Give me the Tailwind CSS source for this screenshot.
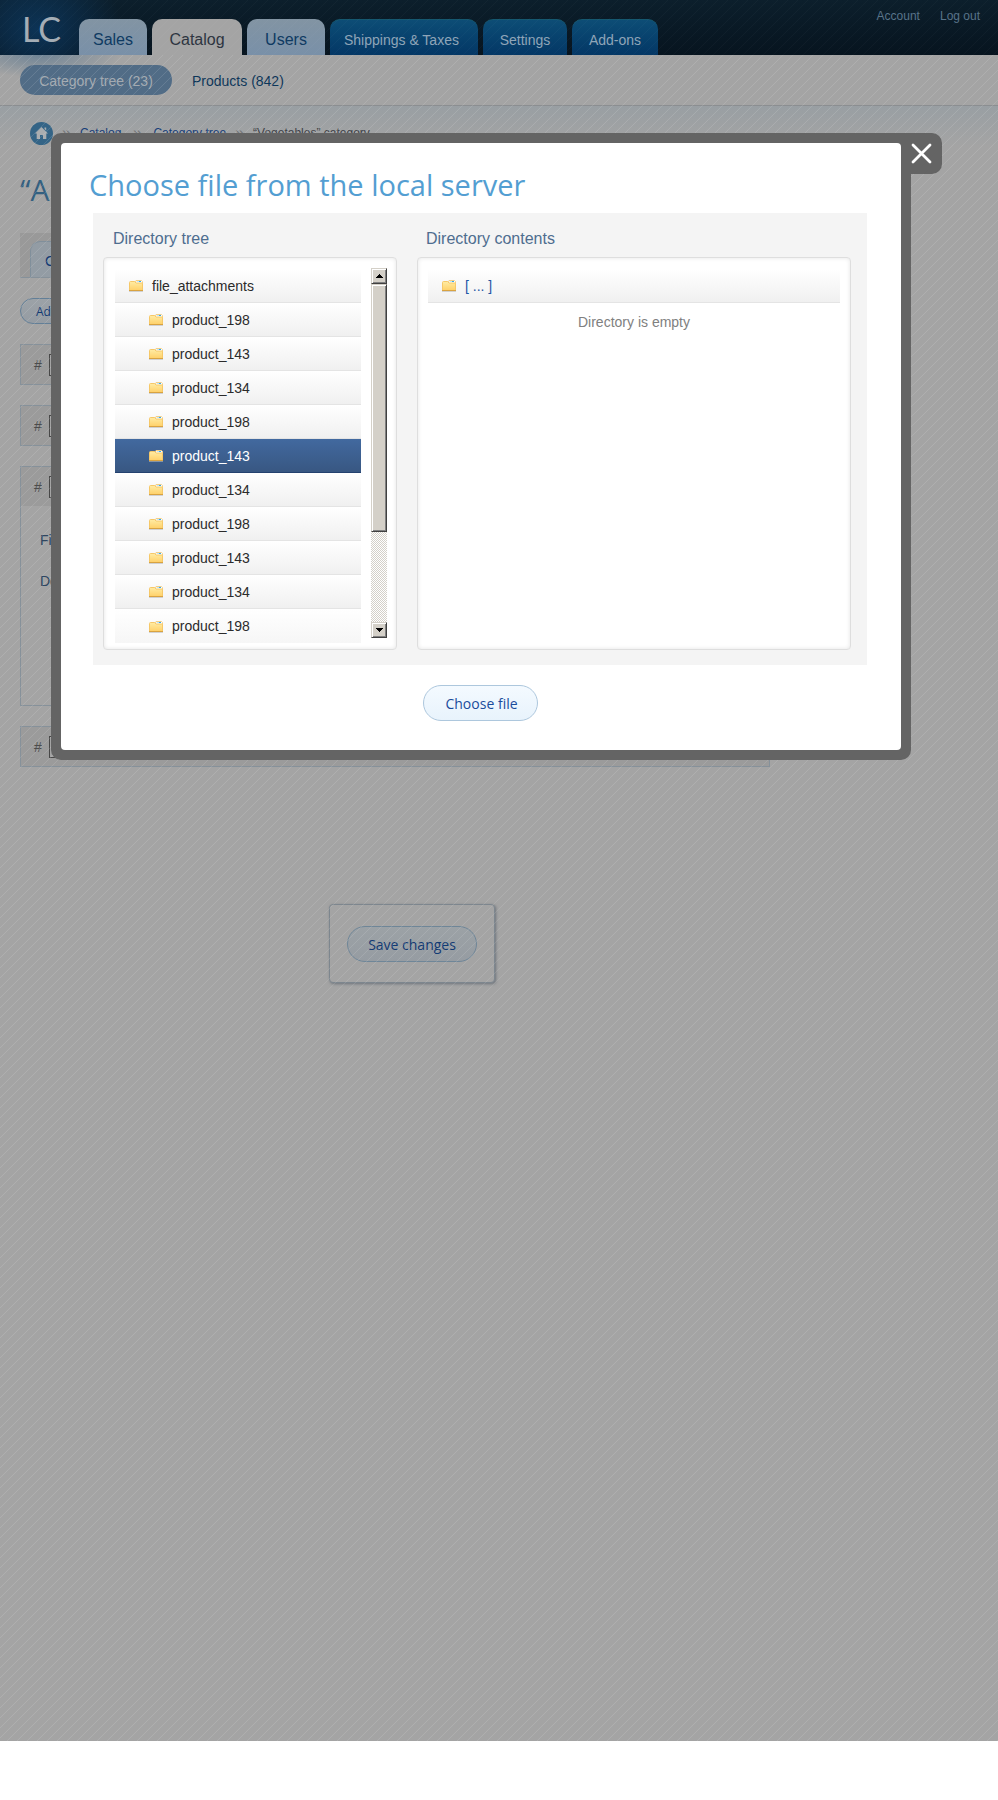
<!DOCTYPE html>
<html lang="en">
<head>
<meta charset="utf-8">
<meta name="viewport" content="width=device-width, initial-scale=1">
<title>Choose file from the local server</title>
<script src="https://cdn.jsdelivr.net/npm/@tailwindcss/browser@4"></script>
</head>
<body class="bg-white font-['Liberation_Sans',Arial,sans-serif] text-sm text-[#333333]">
<svg width="0" height="0" class="absolute" aria-hidden="true">
  <defs>
    <linearGradient id="fold" x1="0" y1="0" x2="0" y2="1"><stop offset="0" stop-color="#ffeca4"/><stop offset="1" stop-color="#ffd068"/></linearGradient>
    <symbol id="folder" viewBox="0 0 14 13">
      <path d="M0 12h14v1H0z" fill="#b9b9b9" opacity=".6"/>
      <path d="M7 1.500h5.500l1 1V5H6z" fill="#fff" stroke="#f3cf86"/>
      <path d="M10 2h2v1h-2z" fill="#35a9ec"/>
      <path d="M8 2h2v1H8z" fill="#bfe6f8"/>
      <path d="M.500 3.500q0-1 1-1h4.200l1.300 1.500h6q.500 0 .500.500v7H.500z" fill="url(#fold)" stroke="#f6c868"/>
      <path d="M0 11h14v1H0z" fill="#d9a340"/>
    </symbol>
  </defs>
</svg>

<div class="relative min-h-[1741px] overflow-hidden bg-[#a4a4a4]">
  <header class="relative flex h-[55px] items-end bg-linear-to-b from-[#0c1f2c] to-[#07141f]">
    <div class="absolute inset-0 bg-[radial-gradient(ellipse_84px_70px_at_38px_30px,#0d3a62cc_0%,#0c335688_50%,transparent_100%)]"></div>
    <a href="#" aria-label="LC home" class="relative flex h-[55px] w-[79px] items-center pl-[22px] pt-0.5 font-['Lato',sans-serif] text-[34px] leading-none text-[#a4adb5]">LC</a>
    <nav class="relative flex h-9 items-stretch gap-[5px] text-sm text-[#8fa5b8]">
      <a href="#" class="flex w-[68px] items-center justify-center rounded-t-[10px] bg-linear-to-b from-[#8294a3] to-[#7990a8] pt-1.5 text-base text-[#0e3a62]">Sales</a>
      <a href="#" class="flex w-[90px] items-center justify-center rounded-t-[10px] bg-[#a4a4a4] pt-1.5 text-base text-[#2d3440]">Catalog</a>
      <a href="#" class="flex w-[78px] items-center justify-center rounded-t-[10px] bg-linear-to-b from-[#8294a3] to-[#7990a8] pt-1.5 text-base text-[#0e3a62]">Users</a>
      <a href="#" class="flex w-[148px] items-center rounded-t-[10px] border-t border-[#155870] bg-linear-to-b from-[#0d4d76] to-[#043765] pl-3.5 pt-1">Shippings &amp; Taxes</a>
      <a href="#" class="flex w-[84px] items-center justify-center rounded-t-[10px] border-t border-[#155870] bg-linear-to-b from-[#0d4d76] to-[#043765] pt-1">Settings</a>
      <a href="#" class="flex w-[86px] items-center justify-center rounded-t-[10px] border-t border-[#155870] bg-linear-to-b from-[#0d4d76] to-[#043765] pt-1">Add-ons</a>
    </nav>
    <div class="ml-auto flex gap-5 self-start pr-[18px] pt-2 text-xs text-[#587389]">
      <a href="#">Account</a>
      <a href="#">Log out</a>
    </div>
  </header>

  <nav class="relative flex h-[51px] items-center gap-5 border-b border-[#8b8e91] bg-[radial-gradient(ellipse_80px_22px_at_40px_0px,#4d6f8c99,transparent)] pl-5">
    <a href="#" class="flex h-[30px] w-[152px] items-center justify-center rounded-full bg-[#516c86] text-[#a3aab1]"><span class="pt-0.5">Category tree (23)</span></a>
    <a href="#" class="pt-0.5 text-[#0d3659]">Products (842)</a>
  </nav>

  <main class="bg-[linear-gradient(#999fa3,#a4a4a4_40px)] pl-5">
    <nav class="flex items-center pl-2.5 pt-[15px] text-xs text-[#3f4249]" aria-label="Breadcrumb">
      <a href="#" aria-label="Home"><svg width="23" height="23" viewBox="0 0 23 23"><circle cx="11.500" cy="11.500" r="11.500" fill="#346486"/><path d="M11.500 5L18 11.500h-1.700V17h-3.300v-4h-3v4H6.700v-5.500H5z M14.500 5.500h1.700v3l-1.700-1.500z" fill="#a9adb0"/></svg></a>
      <span class="flex w-[27px] justify-center text-base leading-6 text-[#747679]">»</span>
      <a href="#" class="text-[#173e79] underline">Catalog</a>
      <span class="flex w-8 justify-center text-base leading-6 text-[#747679]">»</span>
      <a href="#" class="text-[#173e79] underline">Category tree</a>
      <span class="flex w-[27px] justify-center text-base leading-6 text-[#747679]">»</span>
      <span>“Vegetables” category</span>
    </nav>

    <h1 class="mt-5 font-['Open_Sans',sans-serif] text-3xl leading-[50px] text-[#346080]">“A</h1>

    <div class="mr-5 mt-[18px] flex h-[45px] max-w-[750px] items-end border-b border-[#86919a] bg-[#999999] pl-2.5">
      <div class="flex h-9 w-24 items-center rounded-t-[10px] border border-b-0 border-[#808f9b] bg-[#939ca4] pl-3.5 pt-0.5 text-[#123a73]">C</div>
    </div>
    <button class="mt-5 flex h-[26px] w-24 items-center rounded-full border border-[#637f97] bg-linear-to-b from-[#9ca2a7] to-[#959ca3] pl-[15px] pt-0.5 font-['Open_Sans',sans-serif] text-xs font-medium text-[#123a73]">Add</button>

    <div class="mr-5 mt-5 flex max-w-[750px] flex-col gap-5">
      <div class="flex h-[41px] items-center border border-[#86919a] bg-[#9b9b9b] pl-[13px] text-[#4c4c4c]">
        <label for="n1" class="w-[15px]">#</label><input id="n1" class="h-[22px] w-12 border border-[#484848] bg-[#a4a4a4]">
      </div>
      <div class="flex h-[41px] items-center border border-[#86919a] bg-[#9b9b9b] pl-[13px] text-[#4c4c4c]">
        <label for="n2" class="w-[15px]">#</label><input id="n2" class="h-[22px] w-12 border border-[#484848] bg-[#a4a4a4]">
      </div>
      <div class="h-[240px] border border-[#86919a]">
        <div class="flex h-[39px] items-center bg-[#9b9b9b] pl-[13px] text-[#4c4c4c]">
          <label for="n3" class="w-[15px]">#</label><input id="n3" class="h-[22px] w-12 border border-[#484848] bg-[#a4a4a4]">
        </div>
        <div class="flex flex-col gap-5 pl-[19px] pt-6 leading-[21px] text-[#2e4661]">
          <span>Fi</span>
          <span>De</span>
        </div>
      </div>
      <div class="flex h-[41px] items-center border border-[#86919a] bg-[#9b9b9b] pl-[13px] text-[#4c4c4c]">
        <label for="n4" class="w-[15px]">#</label><input id="n4" class="h-[22px] w-12 border border-[#484848] bg-[#a4a4a4]">
      </div>
    </div>

    <div class="ml-[309px] mt-[137px] flex h-[79px] w-[166px] items-center justify-center rounded border border-[#7d868e] bg-[#a4a4a4] shadow-[1px_1px_3px_#6d737a]">
      <button class="h-9 w-[130px] rounded-full border border-[#6f8698] bg-linear-to-b from-[#9ca2a6] to-[#969ca2] pt-0.5 font-['Open_Sans',sans-serif] text-sm font-medium text-[#123a73]">Save changes</button>
    </div>
  </main>

  <svg class="pointer-events-none absolute inset-0 h-full w-full" aria-hidden="true">
    <defs>
      <pattern id="stripes" width="10" height="10" patternUnits="userSpaceOnUse">
        <path d="M-2 10L10 -2M7 11L11 7" stroke="#fff" stroke-width="1" stroke-opacity=".12"/>
      </pattern>
    </defs>
    <rect y="55" width="100%" height="100%" fill="url(#stripes)"/>
    <rect width="100%" height="55" fill="url(#stripes)" opacity=".25"/>
  </svg>

  <div role="dialog" aria-labelledby="dlg-title" class="absolute left-[51px] right-[87px] top-[133px] rounded-[10px] rounded-tr-none bg-[#646464] p-2.5">
    <button aria-label="Close" class="absolute left-full top-0 flex h-[41px] w-[31px] items-center rounded-r-[10px] bg-[#646464]">
      <svg width="21" height="21" viewBox="0 0 21 21" fill="none" stroke="#fff" stroke-width="2.800" stroke-linecap="round"><path d="M2 2l17 17M19 2L2 19"/></svg>
    </button>
    <div class="rounded bg-white pb-[29px] pl-8 pr-[34px] pt-5">
      <h2 id="dlg-title" class="-ml-1 font-['Open_Sans',sans-serif] text-[29px] leading-[44px] text-[#539ed2]">Choose file from the local server</h2>
      <div class="mt-1.5 flex h-[452px] gap-5 bg-[#f4f4f4] pb-[15px] pl-2.5 pr-4 pt-3.5">
        <section class="flex w-[294px] flex-col">
          <h3 class="pl-2.5 pt-0.5 text-base leading-5 text-[#4e6d8f]">Directory tree</h3>
          <div class="mt-2 flex flex-1 rounded border border-[#dedede] bg-white pb-1.5 pl-[11px] pr-[9px] pt-2.5 shadow-[inset_0_0_4px_#0000001c]">
            <ul class="h-[375px] flex-1 overflow-hidden pt-px text-[#2b2b2b]">
              <li class="flex h-[34px] items-center gap-[9px] border-b border-[#e4e4e4] bg-linear-to-b from-white to-[#f0f0f0] pl-3.5"><svg width="14" height="13"><use href="#folder"/></svg>file_attachments</li>
              <li class="flex h-[34px] items-center gap-[9px] border-b border-[#e4e4e4] bg-linear-to-b from-white to-[#f0f0f0] pl-[34px]"><svg width="14" height="13"><use href="#folder"/></svg>product_198</li>
              <li class="flex h-[34px] items-center gap-[9px] border-b border-[#e4e4e4] bg-linear-to-b from-white to-[#f0f0f0] pl-[34px]"><svg width="14" height="13"><use href="#folder"/></svg>product_143</li>
              <li class="flex h-[34px] items-center gap-[9px] border-b border-[#e4e4e4] bg-linear-to-b from-white to-[#f0f0f0] pl-[34px]"><svg width="14" height="13"><use href="#folder"/></svg>product_134</li>
              <li class="flex h-[34px] items-center gap-[9px] border-b border-[#e4e4e4] bg-linear-to-b from-white to-[#f0f0f0] pl-[34px]"><svg width="14" height="13"><use href="#folder"/></svg>product_198</li>
              <li class="flex h-[34px] items-center gap-[9px] border-b border-[#24426f] bg-linear-to-b from-[#42699f] to-[#385782] pl-[34px] text-white"><svg width="14" height="13"><use href="#folder"/></svg>product_143</li>
              <li class="flex h-[34px] items-center gap-[9px] border-b border-[#e4e4e4] bg-linear-to-b from-white to-[#f0f0f0] pl-[34px]"><svg width="14" height="13"><use href="#folder"/></svg>product_134</li>
              <li class="flex h-[34px] items-center gap-[9px] border-b border-[#e4e4e4] bg-linear-to-b from-white to-[#f0f0f0] pl-[34px]"><svg width="14" height="13"><use href="#folder"/></svg>product_198</li>
              <li class="flex h-[34px] items-center gap-[9px] border-b border-[#e4e4e4] bg-linear-to-b from-white to-[#f0f0f0] pl-[34px]"><svg width="14" height="13"><use href="#folder"/></svg>product_143</li>
              <li class="flex h-[34px] items-center gap-[9px] border-b border-[#e4e4e4] bg-linear-to-b from-white to-[#f0f0f0] pl-[34px]"><svg width="14" height="13"><use href="#folder"/></svg>product_134</li>
              <li class="flex h-[34px] items-center gap-[9px] bg-linear-to-b from-white to-[#f6f6f6] pl-[34px]"><svg width="14" height="13"><use href="#folder"/></svg>product_198</li>
            </ul>
            <div class="ml-2.5 flex h-[370px] w-4 flex-col bg-[repeating-conic-gradient(#d4d0c8_0%_25%,#ffffff_0%_50%)] bg-size-[2px_2px]">
              <button aria-label="Scroll up" class="flex h-4 items-center justify-center border border-b-[#404040] border-l-[#d4d0c8] border-r-[#404040] border-t-[#d4d0c8] bg-[#d4d0c8] shadow-[inset_1px_1px_0_#fff,inset_-1px_-1px_0_#808080]"><svg width="7" height="4" viewBox="0 0 7 4" shape-rendering="crispEdges"><path d="M3 0h1v1H3zM2 1h3v1H2zM1 2h5v1H1zM0 3h7v1H0z"/></svg></button>
              <div class="h-[248px] border border-b-[#404040] border-l-[#d4d0c8] border-r-[#404040] border-t-[#d4d0c8] bg-[#d4d0c8] shadow-[inset_1px_1px_0_#fff,inset_-1px_-1px_0_#808080]"></div>
              <button aria-label="Scroll down" class="mt-auto flex h-4 items-center justify-center border border-b-[#404040] border-l-[#d4d0c8] border-r-[#404040] border-t-[#d4d0c8] bg-[#d4d0c8] shadow-[inset_1px_1px_0_#fff,inset_-1px_-1px_0_#808080]"><svg width="7" height="4" viewBox="0 0 7 4" shape-rendering="crispEdges"><path d="M0 0h7v1H0zM1 1h5v1H1zM2 2h3v1H2zM3 3h1v1H3z"/></svg></button>
            </div>
          </div>
        </section>
        <section class="flex flex-1 flex-col">
          <h3 class="pl-[9px] pt-0.5 text-base leading-5 text-[#4e6d8f]">Directory contents</h3>
          <div class="mt-2 flex-1 rounded border border-[#dedede] bg-white px-2.5 pt-[11px] shadow-[inset_0_0_4px_#0000001c]">
            <a href="#" class="flex h-[34px] items-center gap-[9px] border-b border-[#e4e4e4] bg-linear-to-b from-white to-[#f0f0f0] pl-3.5 text-[#1f58a6]"><svg width="14" height="13"><use href="#folder"/></svg>[ ... ]</a>
            <p class="pt-[9px] text-center text-[#808080]">Directory is empty</p>
          </div>
        </section>
      </div>
      <button class="ml-[330px] mt-5 block h-9 w-[115px] rounded-full border border-[#adc7dd] bg-linear-to-b from-[#f4faff] to-[#e8f3fc] pl-0.5 pt-0.5 font-['Open_Sans',sans-serif] text-sm font-medium text-[#1a4c9c]">Choose file</button>
    </div>
  </div>
</div>
</body>
</html>
